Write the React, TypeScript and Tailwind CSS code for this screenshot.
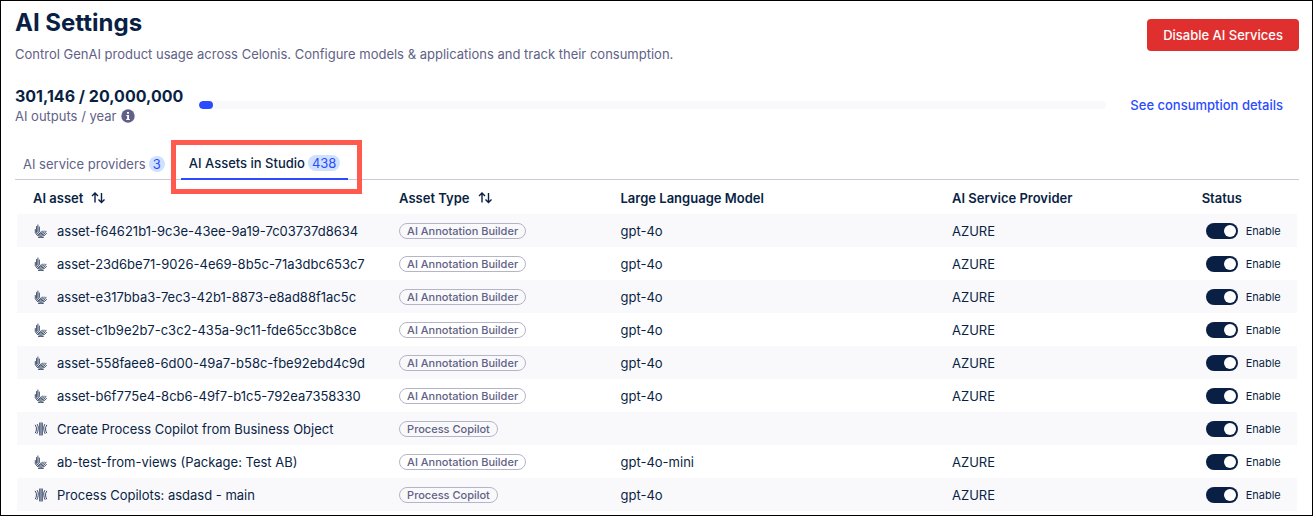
import { useState } from 'react';

type AssetType = 'AI Annotation Builder' | 'Process Copilot';

interface Asset {
  name: string;
  type: AssetType;
  model?: string;
  provider?: string;
}

const ASSETS: Asset[] = [
  { name: 'asset-f64621b1-9c3e-43ee-9a19-7c03737d8634', type: 'AI Annotation Builder', model: 'gpt-4o', provider: 'AZURE' },
  { name: 'asset-23d6be71-9026-4e69-8b5c-71a3dbc653c7', type: 'AI Annotation Builder', model: 'gpt-4o', provider: 'AZURE' },
  { name: 'asset-e317bba3-7ec3-42b1-8873-e8ad88f1ac5c', type: 'AI Annotation Builder', model: 'gpt-4o', provider: 'AZURE' },
  { name: 'asset-c1b9e2b7-c3c2-435a-9c11-fde65cc3b8ce', type: 'AI Annotation Builder', model: 'gpt-4o', provider: 'AZURE' },
  { name: 'asset-558faee8-6d00-49a7-b58c-fbe92ebd4c9d', type: 'AI Annotation Builder', model: 'gpt-4o', provider: 'AZURE' },
  { name: 'asset-b6f775e4-8cb6-49f7-b1c5-792ea7358330', type: 'AI Annotation Builder', model: 'gpt-4o', provider: 'AZURE' },
  { name: 'Create Process Copilot from Business Object', type: 'Process Copilot' },
  { name: 'ab-test-from-views (Package: Test AB)', type: 'AI Annotation Builder', model: 'gpt-4o-mini', provider: 'AZURE' },
  { name: 'Process Copilots: asdasd - main', type: 'Process Copilot', model: 'gpt-4o', provider: 'AZURE' },
];

const USED = 301146;
const LIMIT = 20000000;

function AnnotationIcon() {
  return (
    <svg className="w-3.5 h-3.5 shrink-0" viewBox="0 0 14 14" fill="none" stroke="currentColor" strokeWidth={0.8} strokeLinecap="round" aria-hidden="true">
      <path d="M3.9 1v7q.5 1.7 2.8 1.7 2.5 0 3.7-2.6" />
      <path d="M5.3 3v4.4q.5 1 1.5 1 1.1 0 1.8-1.4" />
      <path d="M2.6 2.5v6q1 2.6 4.2 2.6 3.7 0 5.3-3.8" />
      <path d="M1.3 5.5v3.2q1.4 3.7 5.5 3.7 3.6 0 5.7-2.8" />
      <path d="M4.5 13.5q2.5.6 4.8 0" />
    </svg>
  );
}

function CopilotIcon() {
  return (
    <svg className="w-3.5 h-3.5 shrink-0" viewBox="0 0 14 14" fill="none" stroke="currentColor" strokeWidth={0.8} strokeLinecap="round" aria-hidden="true">
      <path d="M5.7 1v12M7 .8v12.4M8.3 1v12" />
      <path d="M3.4 2.5q1.4 2.2.8 5-.3 2-1.2 4M10.6 2.5q-1.4 2.2-.8 5 .3 2 1.2 4" />
      <path d="M1.4 3.2q1.6 2.3 1 4.8-.3 1.4-1 2.8M12.6 3.2q-1.6 2.3-1 4.8.3 1.4 1 2.8" />
    </svg>
  );
}

function SortIcon() {
  return (
    <svg className="w-3.5 h-3.5" viewBox="0 0 14 14" fill="none" stroke="currentColor" strokeWidth={1.4} aria-hidden="true">
      <path d="M4 11.5V2M1 5l3-3 3 3" />
      <path d="M10.5 2v9.5M7.5 8.5l3 3 3-3" />
    </svg>
  );
}

function InfoIcon() {
  return (
    <svg className="w-3.5 h-3.5" viewBox="0 0 14 14" aria-hidden="true">
      <circle cx="7" cy="7" r="6.7" fill="#5f6286" />
      <path d="M6 3h2v1.7H6zM5.3 6H8v4h.8v1H5.2v-1h.9V7h-.8z" fill="#fff" />
    </svg>
  );
}

function CountBadge({ count }: { count: number }) {
  return <span className="rounded-full bg-[#cfe1ff] px-1 font-normal leading-4 text-[#2a4bff]">{count}</span>;
}

function StatusToggle({ name }: { name: string }) {
  const [enabled, setEnabled] = useState(true);

  return (
    <label className="ml-1 flex cursor-pointer items-center gap-2 text-[11px] leading-4">
      <input
        type="checkbox"
        role="switch"
        aria-label={`Enable ${name}`}
        checked={enabled}
        onChange={(e) => setEnabled(e.target.checked)}
        className="peer sr-only"
      />
      <span className="flex h-4 w-8 items-center rounded-full bg-gray-400 px-0.5 peer-checked:justify-end peer-checked:bg-[#0a1f44]">
        <span className="h-3 w-3 rounded-full bg-white" />
      </span>
      Enable
    </label>
  );
}

function AssetRow({ asset }: { asset: Asset }) {
  return (
    <tr className="h-[33px] odd:bg-[#f9f9fc]">
      <td className="pr-4 pl-[17px]">
        <div className="flex items-center gap-[9px]">
          {asset.type === 'Process Copilot' ? <CopilotIcon /> : <AnnotationIcon />}
          <span className="whitespace-nowrap">{asset.name}</span>
        </div>
      </td>
      <td className="px-4">
        <span className="flex w-fit items-center whitespace-nowrap rounded-full border border-[#b4b5c9] px-[7px] text-[11px] leading-[14px] font-medium text-[#5f6286]">
          {asset.type}
        </span>
      </td>
      <td className="px-4">{asset.model}</td>
      <td className="px-4">{asset.provider}</td>
      <td className="px-4">
        <StatusToggle name={asset.name} />
      </td>
    </tr>
  );
}

export default function App() {
  const percent = (USED / LIMIT) * 100;

  return (
    <main className="border border-black bg-white pb-1 font-['Inter',sans-serif] text-[13px] leading-5 text-[#0a1f44]">
      {/* Page header */}
      <header className="flex items-start justify-between pt-1.5 pr-[13px] pl-3.5">
        <div>
          <h1 className="text-2xl leading-8 font-bold">AI Settings</h1>
          <p className="mt-[5px] text-[#5f6286]">
            Control GenAI product usage across Celonis. Configure models &amp; applications and track their consumption.
          </p>
        </div>
        <button type="button" className="mt-3 h-8 rounded bg-[#e02f2f] px-4 font-medium text-white">
          Disable AI Services
        </button>
      </header>

      {/* Consumption */}
      <section className="mt-[22px] flex items-center pr-[29px] pl-3.5">
        <div>
          <div className="text-base leading-5 font-bold">
            {USED.toLocaleString('en-US')} / {LIMIT.toLocaleString('en-US')}
          </div>
          <div className="flex items-center gap-[5px] text-[#5f6286]">
            AI outputs / year
            <InfoIcon />
          </div>
        </div>
        <div className="-mt-0.5 ml-4 h-2 flex-1 overflow-hidden rounded-full bg-[#f9f9fc]">
          <div className="h-full rounded-full bg-[#2a4bff]" style={{ width: `${percent}%` }} />
        </div>
        <a href="#consumption" className="-mt-0.5 ml-6 font-medium text-[#2a4bff]">
          See consumption details
        </a>
      </section>

      {/* Tabs */}
      <div role="tablist" className="mt-[22px] mr-[13px] ml-3.5 flex gap-2 border-b border-[#c9cad6]">
        <button type="button" role="tab" aria-selected="false" className="flex h-[31px] items-center gap-[3px] px-2 text-[#5f6286]">
          AI service providers
          <CountBadge count={3} />
        </button>
        <button type="button" role="tab" aria-selected="true" className="relative -mb-px flex h-8 items-center gap-[3px] border-b-2 border-[#2a4bff] px-2 font-medium">
          AI Assets in Studio
          <CountBadge count={438} />
          {/* Callout frame around the active tab */}
          <span className="pointer-events-none absolute -top-2 -right-3.5 -bottom-4 -left-2.5 border-5 border-[#ff5a4d]" />
        </button>
      </div>

      {/* Assets */}
      <div className="pr-[15px] pl-4">
        <table className="w-full table-fixed text-left">
          <colgroup>
            <col className="w-[28.6%]" />
            <col className="w-[17.3%]" />
            <col className="w-[25.9%]" />
            <col className="w-[19.5%]" />
            <col />
          </colgroup>
          <thead>
            <tr className="h-[34px]">
              <th className="px-4 pt-0.5 font-semibold">
                <button type="button" className="flex items-center gap-2">
                  AI asset
                  <SortIcon />
                </button>
              </th>
              <th className="px-4 pt-0.5 font-semibold">
                <button type="button" className="flex items-center gap-2">
                  Asset Type
                  <SortIcon />
                </button>
              </th>
              <th className="px-4 pt-0.5 font-semibold">Large Language Model</th>
              <th className="px-4 pt-0.5 font-semibold">AI Service Provider</th>
              <th className="px-4 pt-0.5 font-semibold">Status</th>
            </tr>
          </thead>
          <tbody>
            {ASSETS.map((asset) => (
              <AssetRow key={asset.name} asset={asset} />
            ))}
          </tbody>
        </table>
      </div>
    </main>
  );
}
